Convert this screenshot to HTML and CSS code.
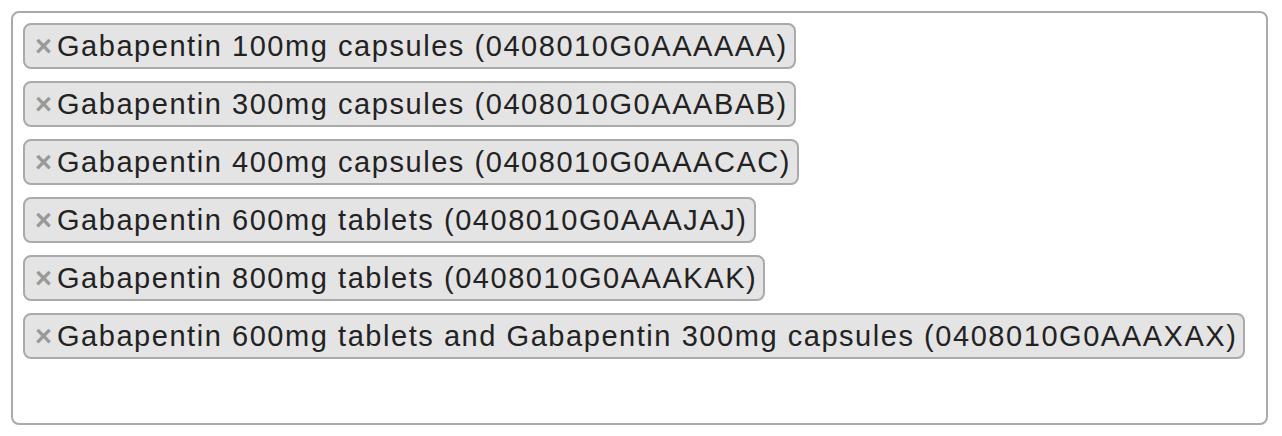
FILE: index.html
```html
<!DOCTYPE html>
<html>
<head>
<meta charset="utf-8">
<link rel="stylesheet" href="styles.css">
</head>
<body>
<div class="select">
  <ul class="choices">
    <li class="choice"><span class="remove">×</span>Gabapentin 100mg capsules (0408010G0AAAAAA)</li>
    <li class="choice"><span class="remove">×</span>Gabapentin 300mg capsules (0408010G0AAABAB)</li>
    <li class="choice"><span class="remove">×</span>Gabapentin 400mg capsules (0408010G0AAACAC)</li>
    <li class="choice"><span class="remove">×</span>Gabapentin 600mg tablets (0408010G0AAAJAJ)</li>
    <li class="choice"><span class="remove">×</span>Gabapentin 800mg tablets (0408010G0AAAKAK)</li>
    <li class="choice"><span class="remove">×</span>Gabapentin 600mg tablets and Gabapentin 300mg capsules (0408010G0AAAXAX)</li>
  </ul>
</div>
</body>
</html>
```

FILE: styles.css
```css
html, body {
  margin: 0;
  padding: 0;
  background: #fff;
}
body {
  padding: 11px 14px 11px 11px;
  font-family: "Liberation Sans", Arial, sans-serif;
}
.select {
  box-sizing: border-box;
  height: 414px;
  border: 2px solid #aaa;
  border-radius: 8px;
  background: #fff;
}
.choices {
  list-style: none;
  margin: 0;
  padding: 10px 10px 0 10px;
  display: flex;
  flex-direction: column;
  align-items: flex-start;
  gap: 12px;
}
.choice {
  box-sizing: border-box;
  height: 46px;
  line-height: 42px;
  border: 2px solid #aaa;
  border-radius: 8px;
  background: #e4e4e4;
  color: #222;
  font-size: 29px;
  letter-spacing: 1.55px;
  padding: 0 6px 0 10px;
  white-space: nowrap;
}
.remove {
  color: #999;
  font-weight: bold;
  font-size: 29px;
  letter-spacing: 0;
  margin-right: 5px;
}
```
